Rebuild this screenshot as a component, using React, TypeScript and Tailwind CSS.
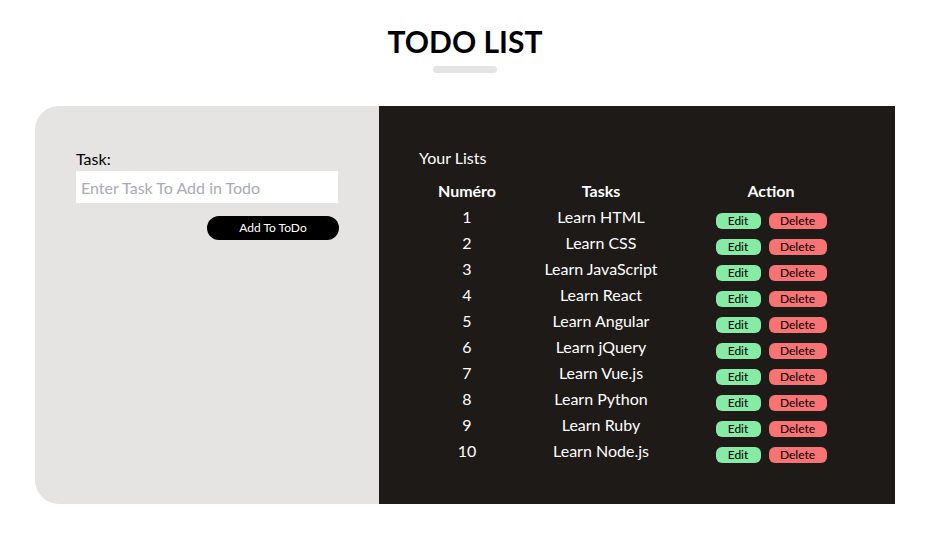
const todos = [
  "Learn HTML",
  "Learn CSS",
  "Learn JavaScript",
  "Learn React",
  "Learn Angular",
  "Learn jQuery",
  "Learn Vue.js",
  "Learn Python",
  "Learn Ruby",
  "Learn Node.js",
];

export default function App() {
  return (
    <div className="min-h-[535px] bg-white font-['Lato',sans-serif]">
      <div className="flex flex-col items-center pt-[22px]">
        <h1 className="text-[30px] font-bold leading-[38px] text-black">
          TODO LIST
        </h1>
        <div className="mt-[6px] h-[7px] w-16 rounded-full bg-[#e5e5e5]" />
      </div>

      <div className="mx-[35px] mt-[33px] flex h-[398px]">
        <div className="w-[344px] rounded-l-[24px] bg-[#e5e4e2] pl-[41px] pt-[41px]">
          <label className="block text-base leading-6 text-black">Task:</label>
          <input
            className="block h-8 w-[262px] bg-white px-[5px] text-base text-black outline-none placeholder:text-[#a9a9b8]"
            placeholder="Enter Task To Add in Todo"
          />
          <div className="mt-[13px] flex w-[263px] justify-end">
            <button className="h-6 w-[132px] rounded-full bg-black text-xs text-white">
              Add To ToDo
            </button>
          </div>
        </div>

        <div className="flex-1 bg-[#1e1a17] pl-10 pt-10 text-white">
          <p className="text-base leading-6">Your Lists</p>
          <div className="mt-2 grid grid-cols-[96px_172px_168px] text-base">
            <div className="text-center font-bold leading-[26px]">Numéro</div>
            <div className="text-center font-bold leading-[26px]">Tasks</div>
            <div className="text-center font-bold leading-[26px]">Action</div>
            {todos.map((t, i) => (
              <div key={t} className="contents">
                <div className="text-center leading-[26px]">{i + 1}</div>
                <div className="text-center leading-[26px]">{t}</div>
                <div className="flex justify-center gap-2 pt-[9px]">
                  <button className="h-4 w-[45px] rounded-md bg-[#86eba5] text-xs leading-4 text-black">
                    Edit
                  </button>
                  <button className="h-4 w-[58px] rounded-md bg-[#f87373] text-xs leading-4 text-black">
                    Delete
                  </button>
                </div>
              </div>
            ))}
          </div>
        </div>
      </div>
    </div>
  );
}
